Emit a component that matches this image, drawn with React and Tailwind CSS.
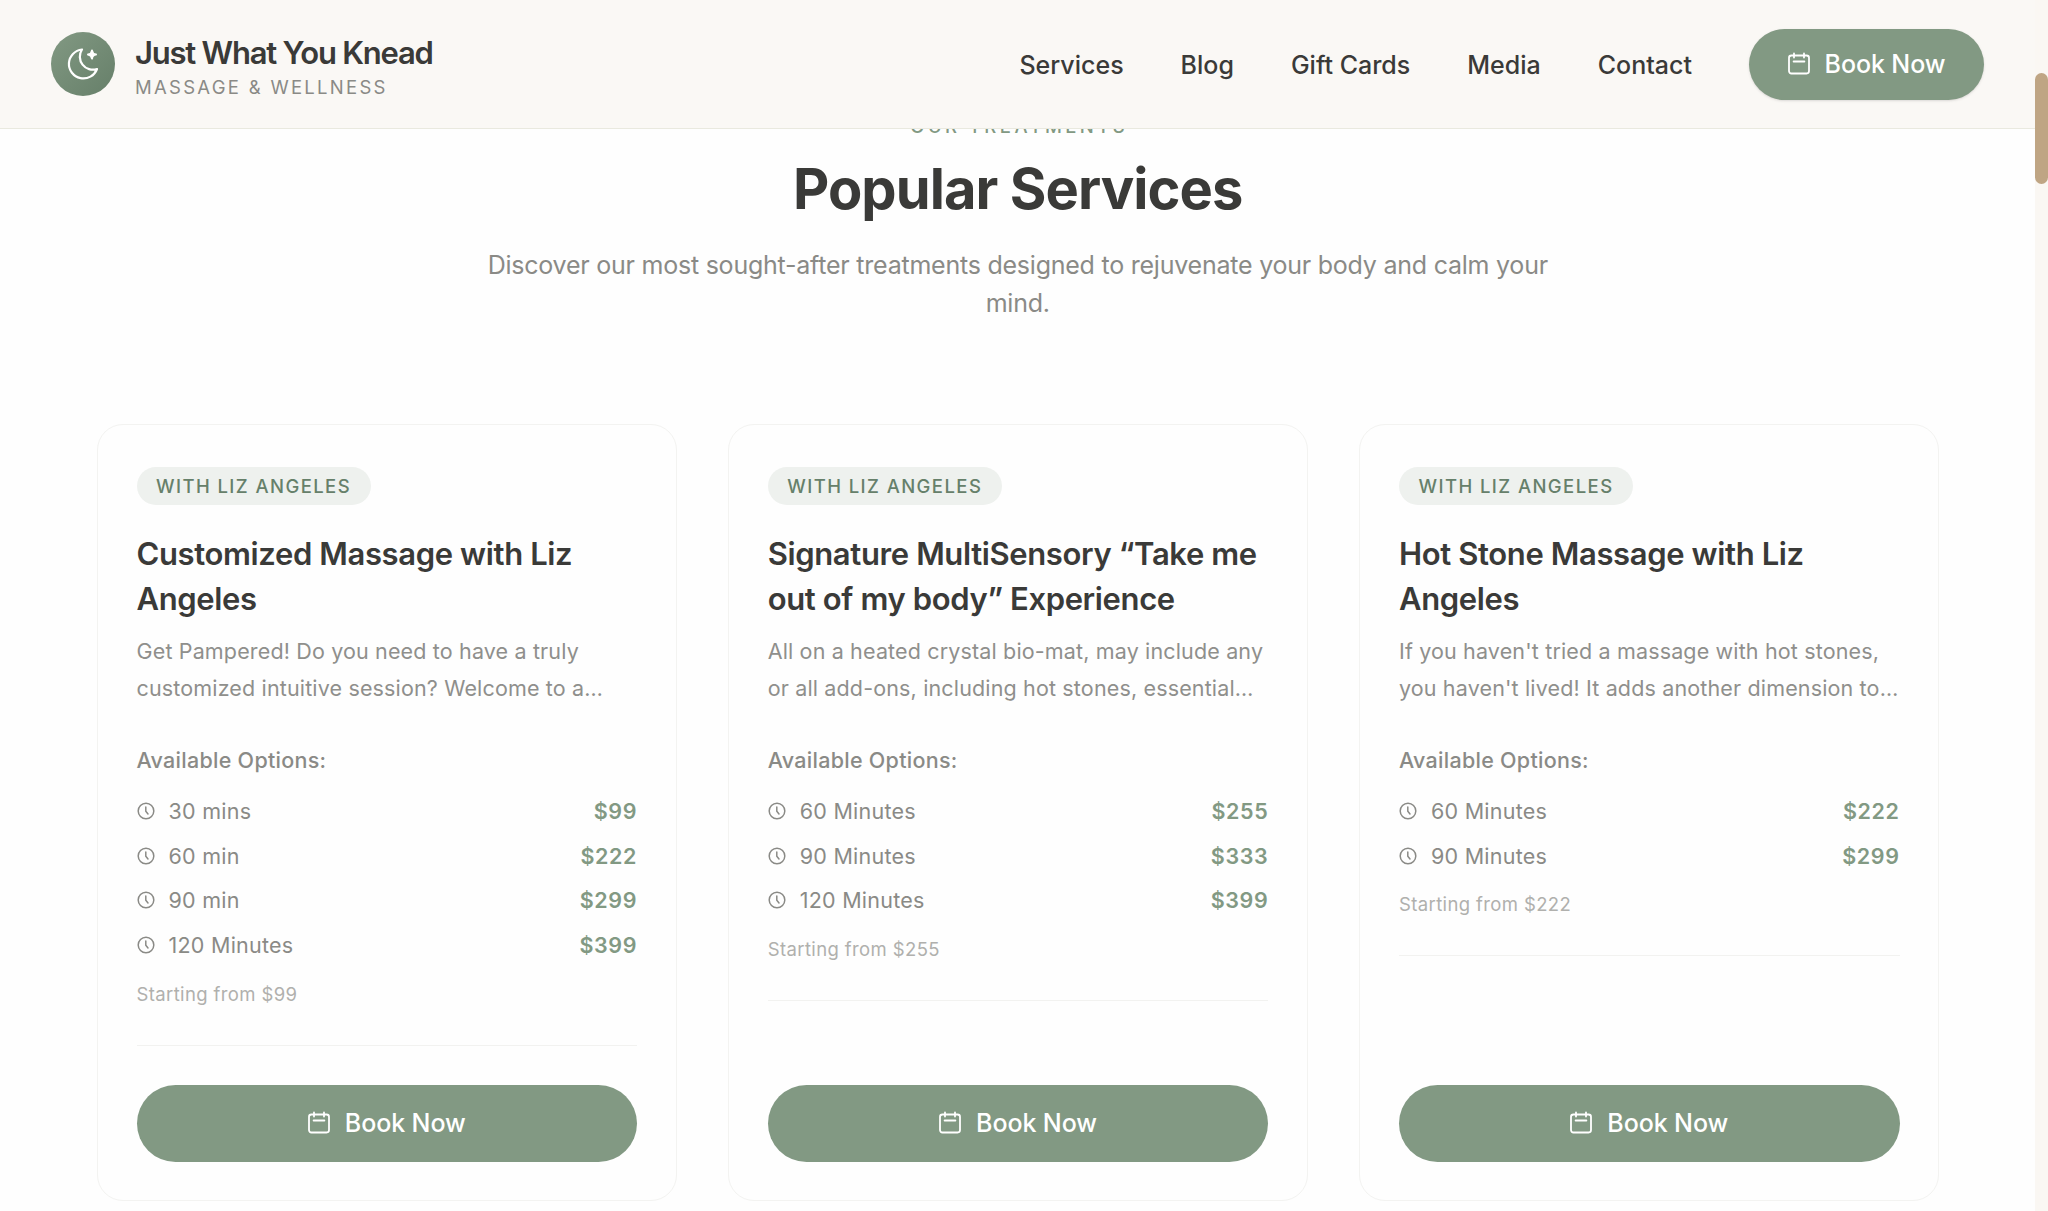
import React from "react";

const NAV_LINKS = ["Services", "Blog", "Gift Cards", "Media", "Contact"];

const SERVICES = [
  {
    provider: "With Liz Angeles",
    title: "Customized Massage with Liz Angeles",
    lines: ["Get Pampered! Do you need to have a truly", "customized intuitive session? Welcome to a…"],
    options: [
      { label: "30 mins", price: 99 },
      { label: "60 min", price: 222 },
      { label: "90 min", price: 299 },
      { label: "120 Minutes", price: 399 },
    ],
  },
  {
    provider: "With Liz Angeles",
    title: "Signature MultiSensory “Take me out of my body” Experience",
    lines: ["All on a heated crystal bio-mat, may include any", "or all add-ons, including hot stones, essential…"],
    options: [
      { label: "60 Minutes", price: 255 },
      { label: "90 Minutes", price: 333 },
      { label: "120 Minutes", price: 399 },
    ],
  },
  {
    provider: "With Liz Angeles",
    title: "Hot Stone Massage with Liz Angeles",
    lines: ["If you haven't tried a massage with hot stones,", "you haven't lived! It adds another dimension to…"],
    options: [
      { label: "60 Minutes", price: 222 },
      { label: "90 Minutes", price: 299 },
    ],
  },
];

function MoonIcon() {
  return (
    <svg viewBox="0 0 64 64" className="w-16 h-16" fill="none">
      <path
        d="M31 17.5A14.5 14.5 0 1 0 46 37A13 13 0 0 1 31 17.5Z"
        stroke="white"
        strokeWidth="2.2"
        strokeLinejoin="round"
      />
      <path
        d="M41 18.6Q41.4 22.2 45 22.6Q41.4 23 41 26.6Q40.6 23 37 22.6Q40.6 22.2 41 18.6Z"
        fill="white"
        stroke="white"
        strokeWidth="2"
        strokeLinejoin="round"
      />
    </svg>
  );
}

function CalendarIcon() {
  return (
    <svg viewBox="0 0 22 24" className="w-[22px] h-6 shrink-0" fill="none" stroke="currentColor" strokeWidth="1.8" strokeLinecap="round">
      <rect x="1" y="3.5" width="20" height="18" rx="2.4" />
      <path d="M6 1.4V5.6M16 1.4V5.6M5.6 9.5H16.4" />
    </svg>
  );
}

function ClockIcon() {
  return (
    <svg viewBox="0 0 18 18" className="w-[18px] h-[18px] shrink-0" fill="none" stroke="currentColor" strokeWidth="1.5" strokeLinecap="round" strokeLinejoin="round">
      <circle cx="9" cy="9" r="7.8" />
      <path d="M8.8 5V9.2L11 12" />
    </svg>
  );
}

function Header() {
  return (
    <header className="relative z-10 h-[129px] shrink-0 bg-[#faf8f5] border-b border-[#e9e9df] px-[51px] flex items-center justify-between">
      <div className="flex items-center gap-5">
        <div className="w-16 h-16 rounded-full bg-linear-to-br from-[#829983] to-[#667f69]">
          <MoonIcon />
        </div>
        <div className="pt-[5px]">
          <div className="text-[31px] leading-[38px] font-semibold tracking-[-1.24px] text-[#3a3a38]">Just What You Knead</div>
          <div className="mt-[2px] text-[18.5px] leading-[26px] tracking-[2.28px] text-[#8a8a86] uppercase">Massage &amp; Wellness</div>
        </div>
      </div>

      <div className="flex items-center gap-[57px]">
        <nav className="flex items-center gap-[57px]">
          {NAV_LINKS.map((link) => (
            <a key={link} href="#" className="pt-px text-[25px] leading-9 font-[450] text-[#3a3a38]">
              {link}
            </a>
          ))}
        </nav>
        <button className="w-[235px] h-[71px] rounded-full bg-[#829983] text-white shadow-sm flex items-center justify-center gap-[15px] cursor-pointer">
          <CalendarIcon />
          <span className="text-[25px] leading-9 font-[450] tracking-[-0.1px]">Book Now</span>
        </button>
      </div>
    </header>
  );
}

function ServiceCard({ service }) {
  return (
    <div className="flex flex-col items-stretch rounded-[26px] border-[1.5px] border-[#f3f3f1] bg-[#fefefe] pl-[39px] pr-[38.5px] pt-[42px] pb-[38px]">
      <span className="self-start h-[38px] px-[19.5px] rounded-full bg-[#eef1ee] text-[#66806a] text-[18.5px] leading-[38px] font-medium tracking-[1.42px] uppercase">
        {service.provider}
      </span>
      <h3 className="mt-[27px] text-[31px] leading-[44.8px] font-semibold tracking-[-0.37px] text-[#3a3a38]">{service.title}</h3>
      <p className="mt-3 text-[21.5px] leading-[36.4px] tracking-[0.15px] text-[#8f8f8c] whitespace-nowrap">
        {service.lines[0]}
        <br />
        {service.lines[1]}
      </p>

      <p className="mt-[37.5px] text-[21.5px] leading-8 font-medium tracking-[0.28px] text-[#8a8a86]">Available Options:</p>
      <ul className="mt-[19px] flex flex-col gap-[12.8px] text-[21.5px] leading-8">
        {service.options.map((o) => (
          <li key={o.label} className="flex items-center justify-between">
            <span className="flex items-center gap-[14px] tracking-[0.25px] text-[#8a8a86]">
              <ClockIcon />
              {o.label}
            </span>
            <span className="font-semibold tracking-[0.6px] text-[#829983]">${o.price}</span>
          </li>
        ))}
      </ul>
      <p className="mt-[19.5px] text-[18.5px] leading-[26px] tracking-[0.38px] text-[#b0b0ad]">
        Starting from ${service.options[0].price}
      </p>
      <div className="mt-[38px] border-t-[1.5px] border-[#f2f2f0]" />

      <button className="mt-auto h-[77px] rounded-full bg-[#829983] text-white flex items-center justify-center gap-[15px] cursor-pointer">
        <CalendarIcon />
        <span className="text-[25px] leading-9 font-[450] tracking-[-0.1px]">Book Now</span>
      </button>
    </div>
  );
}

export default function App() {
  return (
    <div className="h-[1211px] flex overflow-hidden bg-white font-['Inter',sans-serif]">
      <div className="flex-1 min-w-0 flex flex-col">
        <Header />

        <section className="-mt-[17px] pl-[96.5px] pr-24 bg-[#fefefe] flex-1">
          <div className="text-center">
            <span className="block pl-[3px] text-[18.5px] leading-7 font-medium tracking-[3.45px] text-[#829983] uppercase">Our Treatments</span>
            <h2 className="mt-[17px] text-[56px] leading-[64px] font-bold tracking-[-0.92px] text-[#3a3a38]">Popular Services</h2>
            <p className="mt-[25px] mx-auto max-w-[1075px] text-[25px] leading-[38.4px] tracking-[-0.23px] text-[#8a8a86]">
              Discover our most sought-after treatments designed to rejuvenate your body and calm your mind.
            </p>
          </div>

          <div className="mt-[101px] h-[777px] grid grid-cols-3 gap-[51.2px]">
            {SERVICES.map((service) => (
              <ServiceCard key={service.title} service={service} />
            ))}
          </div>
        </section>
      </div>

      {/* Scrollbar */}
      <div className="w-[13px] shrink-0 bg-[#faf7f3] pt-[73px]">
        <div className="h-[111px] rounded-full bg-[#bfa584]" />
      </div>
    </div>
  );
}
